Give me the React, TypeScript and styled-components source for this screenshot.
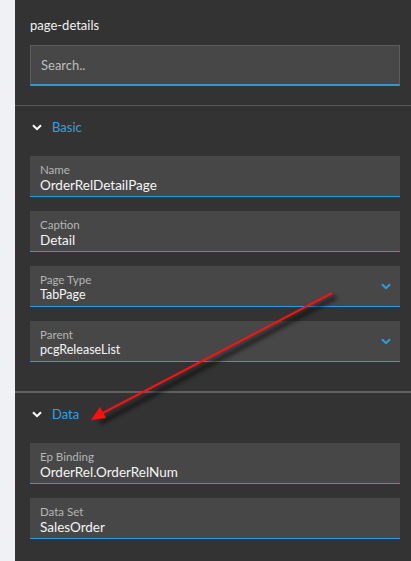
import { createGlobalStyle, styled } from 'styled-components';

const GlobalStyle = createGlobalStyle`
    html, body {
        margin: 0;
        padding: 0;
        background: #333333;
    }
    body {
        font-family: Lato, 'Noto Sans', sans-serif;
    }
`;

const Page = styled.div`
    display: flex;
    width: 411px;
    height: 561px;
    position: relative;
    overflow: hidden;
`;

const Strip = styled.div`
    width: 15px;
    flex-shrink: 0;
    background: #eef2f5;
`;

const Panel = styled.div`
    flex: 1;
    background: #333333;
`;

const Top = styled.div`
    padding: 16px 11px 19px 15px;
`;

const Title = styled.div`
    color: #f2f2f2;
    font-size: 13px;
    line-height: 18px;
    margin-bottom: 11px;
`;

const Search = styled.div`
    height: 38px;
    box-sizing: content-box;
    background: #474747;
    border: 1px solid #5c5c5c;
    border-bottom: 2px solid #2a9bd8;
    display: flex;
    align-items: center;
    padding: 0 10px;
    color: #bdbdbd;
    font-size: 13px;
`;

const Divider = styled.div<{ $thick?: boolean }>`
    height: ${(p) => (p.$thick ? '2px' : '1px')};
    background: ${(p) => (p.$thick ? '#616161' : '#585858')};
`;

const SectionHeader = styled.div`
    height: 42px;
    display: flex;
    align-items: center;
    gap: 10px;
    padding-left: 17px;
    color: #2ea3e3;
    font-size: 13px;
`;

const Fields = styled.div`
    display: flex;
    flex-direction: column;
    gap: 14px;
    padding: 8px 11px 29px 15px;
`;

const Field = styled.div`
    height: 41px;
    flex-shrink: 0;
    background: #474747;
    border-bottom: 1px solid #1e9fe6;
    padding: 7px 10px 0;
    box-sizing: border-box;
    position: relative;
`;

const Label = styled.div`
    color: #b5b5b5;
    font-size: 11.5px;
    line-height: 14px;
`;

const Value = styled.div<{ $small?: boolean }>`
    color: #f5f5f5;
    font-size: ${(p) => (p.$small ? '12.5px' : '13.5px')};
    line-height: 16px;
`;

const Caret = styled.svg`
    position: absolute;
    right: 9px;
    top: 17px;
`;

const Overlay = styled.svg`
    position: absolute;
    left: 0;
    top: 0;
    pointer-events: none;
`;

const Chevron = ({ color }: { color: string }) => (
    <svg width="10" height="7" viewBox="0 0 10 7">
        <path d="M1 1.2 L5 5.2 L9 1.2" fill="none" stroke={color} strokeWidth="2" />
    </svg>
);

type FieldDef = { label: string; value: string; select?: boolean };

const basic: FieldDef[] = [
    { label: 'Name', value: 'OrderRelDetailPage' },
    { label: 'Caption', value: 'Detail' },
    { label: 'Page Type', value: 'TabPage', select: true },
    { label: 'Parent', value: 'pcgReleaseList', select: true },
];

const data: FieldDef[] = [
    { label: 'Ep Binding', value: 'OrderRel.OrderRelNum' },
    { label: 'Data Set', value: 'SalesOrder' },
];

const FieldList = ({ items }: { items: FieldDef[] }) => (
    <Fields>
        {items.map((f) => (
            <Field key={f.label}>
                <Label>{f.label}</Label>
                <Value $small={f.select}>{f.value}</Value>
                {f.select && (
                    <Caret width="10" height="7" viewBox="0 0 10 7">
                        <path d="M1 1.2 L5 5.2 L9 1.2" fill="none" stroke="#2a9fe0" strokeWidth="2" />
                    </Caret>
                )}
            </Field>
        ))}
    </Fields>
);

const App = () => {
    return (
        <>
            <GlobalStyle />
            <Page>
                <Strip />
                <Panel>
                    <Top>
                        <Title>page-details</Title>
                        <Search>Search..</Search>
                    </Top>
                    <Divider />
                    <SectionHeader>
                        <Chevron color="#ffffff" />
                        Basic
                    </SectionHeader>
                    <FieldList items={basic} />
                    <Divider $thick />
                    <SectionHeader>
                        <Chevron color="#ffffff" />
                        Data
                    </SectionHeader>
                    <FieldList items={data} />
                </Panel>
                <Overlay width="411" height="561">
                    <defs>
                        <filter id="sh" x="-20%" y="-20%" width="140%" height="140%">
                            <feGaussianBlur stdDeviation="2" />
                        </filter>
                    </defs>
                    <g filter="url(#sh)" opacity="0.6">
                        <line x1="336" y1="297" x2="100" y2="423" stroke="#000" strokeWidth="4" />
                    </g>
                    <line x1="332" y1="293" x2="99" y2="415" stroke="#ff1010" strokeWidth="2" />
                    <path d="M91 420 L100 407 L106 418 Z" fill="#ff1010" />
                </Overlay>
            </Page>
        </>
    );
};

export default App;
